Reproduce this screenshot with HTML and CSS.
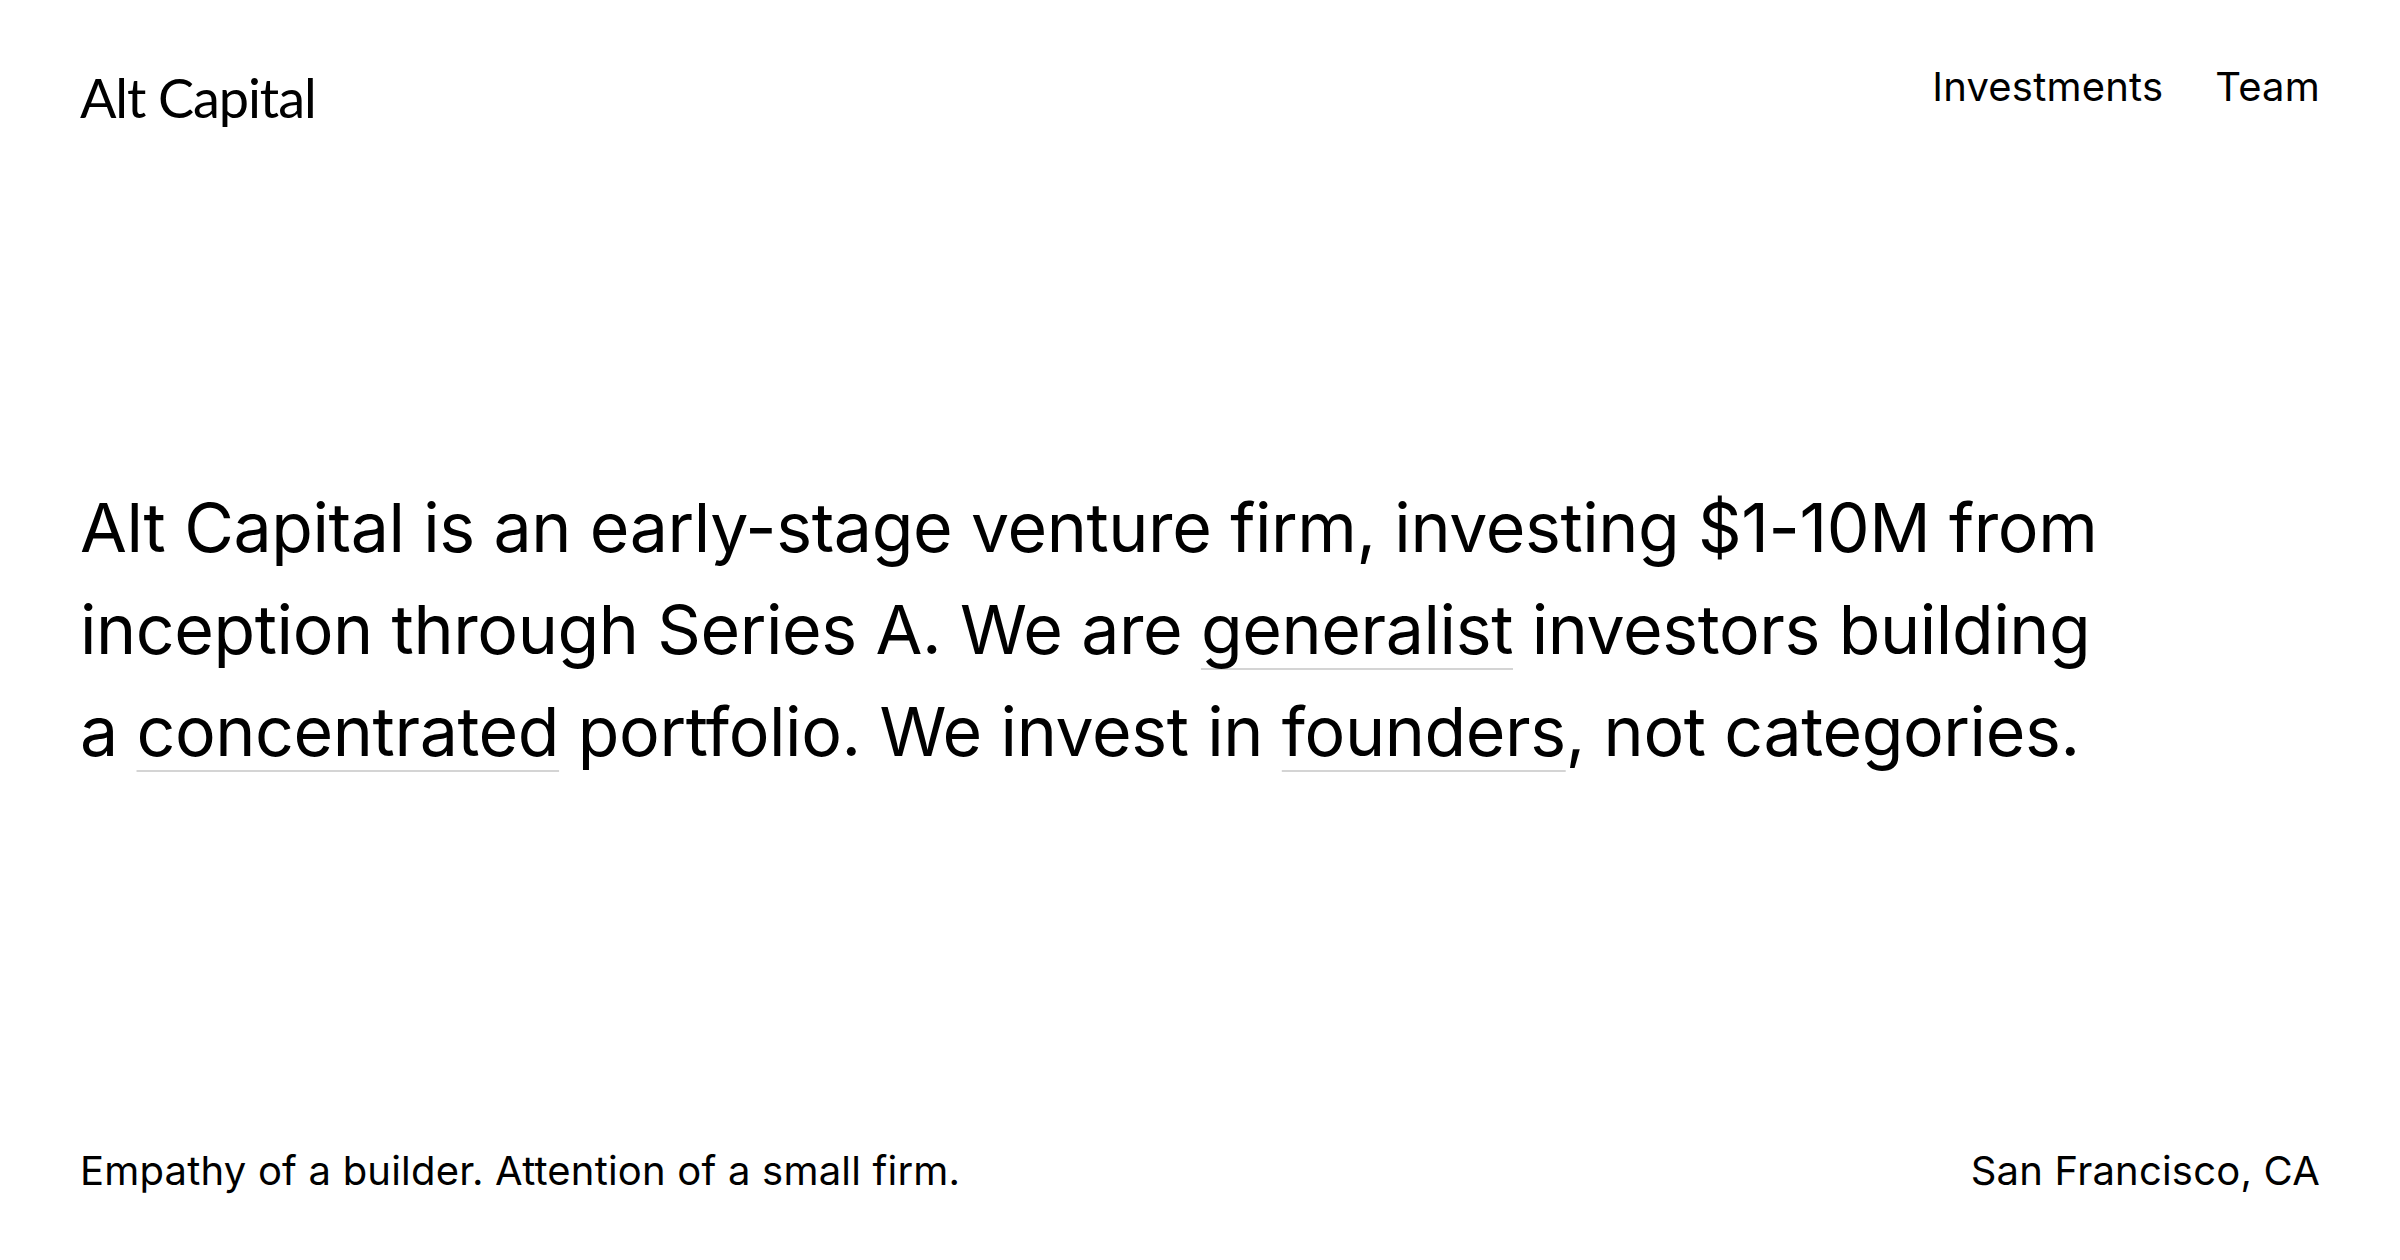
FILE: index.html
```html
<!DOCTYPE html>
<html lang="en">
<head>
<meta charset="utf-8">
<title>Alt Capital</title>
<link rel="stylesheet" href="styles.css">
</head>
<body>
<div class="page">
  <header class="header">
    <a class="logo" href="#">Alt Capital</a>
    <nav class="nav">
      <a href="#">Investments</a>
      <a href="#">Team</a>
    </nav>
  </header>
  <main class="hero">
    <p class="statement">Alt Capital is an early-stage venture firm, investing $1-10M from inception through Series A. We are <a class="term" href="#">generalist</a> investors building a <a class="term" href="#">concentrated</a> portfolio. We invest in <a class="term" href="#">founders</a>, not categories.</p>
  </main>
  <footer class="footer">
    <span>Empathy of a builder. Attention of a small firm.</span>
    <span>San Francisco, CA</span>
  </footer>
</div>
</body>
</html>
```
FILE: styles.css
```css
* { box-sizing: border-box; }
html, body { margin: 0; padding: 0; background: #fff; }
body {
  font-family: Inter, "Noto Sans", sans-serif;
  color: #000;
}
a { color: inherit; text-decoration: none; }
.page {
  height: 100vh;
  display: grid;
  grid-template-rows: 1fr auto 1fr;
  padding: 63px 80px 65px;
}
.header {
  display: flex;
  justify-content: space-between;
  align-items: flex-start;
}
.logo {
  font-family: Lato, sans-serif;
  font-size: 54px;
  line-height: 1;
  letter-spacing: -0.02em;
  margin-top: 8px;
}
.nav {
  display: flex;
  gap: 52px;
  font-size: 40px;
  line-height: 1.2;
  letter-spacing: 0.005em;
}
.hero {
  display: flex;
  align-items: center;
}
.statement {
  margin: 0;
  font-size: 68px;
  line-height: 1.5;
  letter-spacing: -0.4px;
  max-width: 2040px;
}
.term {
  text-decoration: underline;
  text-decoration-color: #d4d4d4;
  text-decoration-thickness: 2px;
  text-underline-offset: 14px;
  text-decoration-skip-ink: none;
}
.footer {
  display: flex;
  justify-content: space-between;
  align-items: flex-end;
  font-size: 40px;
  line-height: 1.2;
  letter-spacing: 0.005em;
}
```
